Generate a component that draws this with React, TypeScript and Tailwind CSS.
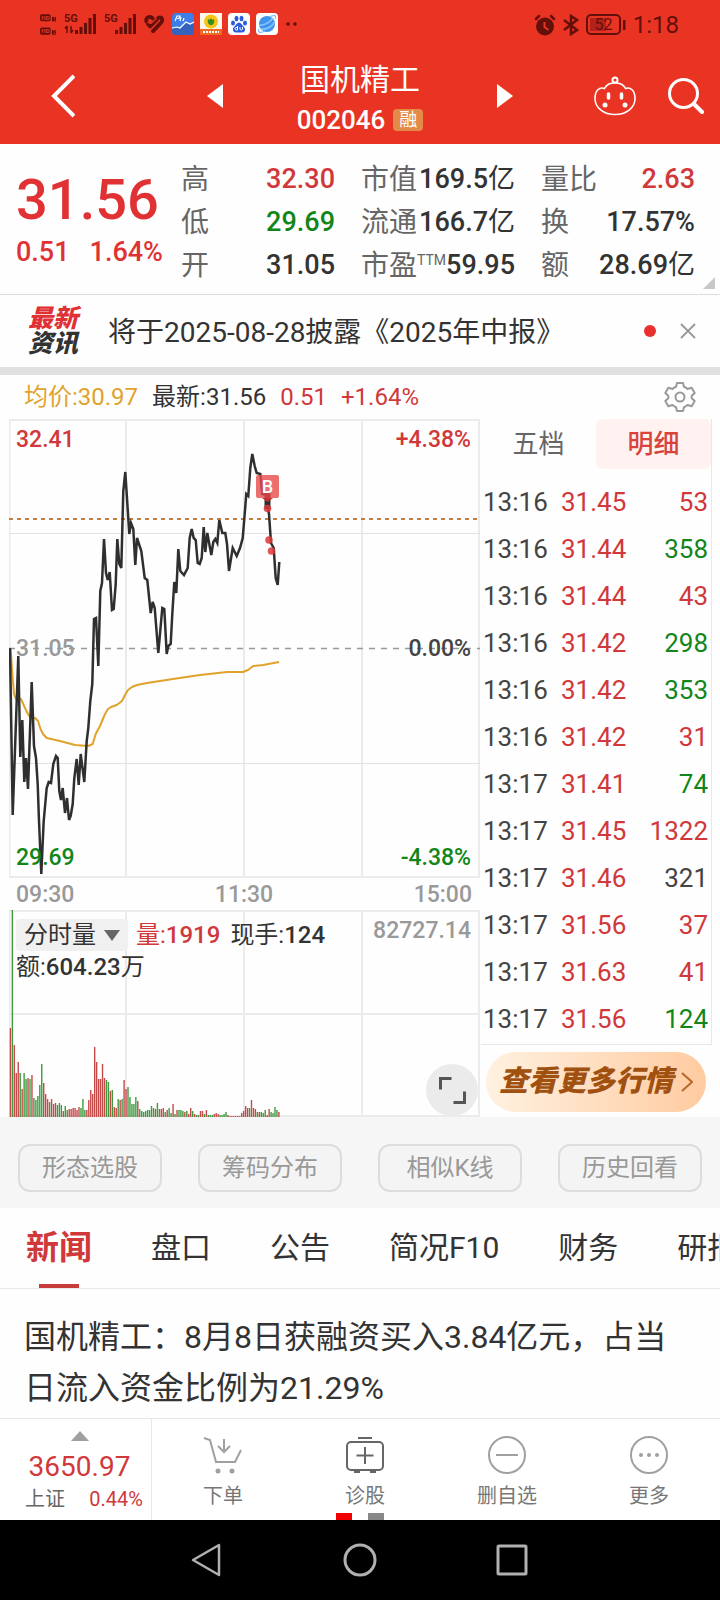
import React from 'react'

const UP = 'text-[#d0383a]'
const DOWN = 'text-[#12861a]'
const INK = 'text-[#333333]'

type Stat = { label: string; sup?: string; value: string; unit?: string; tone: string }

const stats: Stat[] = [
  { label: '高', value: '32.30', tone: UP },
  { label: '市值', value: '169.5', unit: '亿', tone: INK },
  { label: '量比', value: '2.63', tone: UP },
  { label: '低', value: '29.69', tone: DOWN },
  { label: '流通', value: '166.7', unit: '亿', tone: INK },
  { label: '换', value: '17.57%', tone: INK },
  { label: '开', value: '31.05', tone: INK },
  { label: '市盈', sup: 'TTM', value: '59.95', tone: INK },
  { label: '额', value: '28.69', unit: '亿', tone: INK },
]

const trades: [string, string, string, string][] = [
  ['13:16', '31.45', '53', UP],
  ['13:16', '31.44', '358', DOWN],
  ['13:16', '31.44', '43', UP],
  ['13:16', '31.42', '298', DOWN],
  ['13:16', '31.42', '353', DOWN],
  ['13:16', '31.42', '31', UP],
  ['13:17', '31.41', '74', DOWN],
  ['13:17', '31.45', '1322', UP],
  ['13:17', '31.46', '321', 'text-[#444444]'],
  ['13:17', '31.56', '37', UP],
  ['13:17', '31.63', '41', UP],
  ['13:17', '31.56', '124', DOWN],
]

const priceLine =
  '10,647 12.7,814 18.3,655 20.3,756 22.3,719 24.3,781 26,757 28,788 31.7,681 34,745 36,757 37.7,783 39,820 41.3,873 43.7,820 46.7,787 48.7,781 51,782 53.3,763 56,755 57.7,757 59.3,790 61,799 62.7,787 65,812 67,797 69,819 70.7,815 72.7,803 74.3,777 76.7,758 78.7,784 80.7,753 84.3,781 86.7,740 88.3,727 90.3,700 92.3,683 94,618 96,617 98.3,665 100.3,590 102,582 104,538 106,572 107.7,579 109.7,571 112,609 113.7,608 115.7,583 117.3,538 119.3,563 121.3,567 123.3,490 125.3,471 129.3,533 131,522 133.3,528 135.3,564 137,537 141.3,550 144.7,577 147.3,579 150.7,612 152.7,601 154.7,607 158.3,652 162.3,607 164.3,608 166.7,653 168.3,645 170.7,643 172.3,613 174.3,581 176.3,592 178.3,548 180.3,570 184,574 187.7,567 189.7,537 191.7,528 193.7,537 195.7,539 197.7,562 199.7,563 201.7,557 203.7,526 205.3,551 207.3,532 211.3,554 213.3,541 215.3,538 217.3,542 219.3,519 222.3,532 225.3,532 227,543 229,570 232.7,547 236.7,555 240,547 242.7,537 244.7,513 246.3,493 248.3,495 250.3,467 252.3,453 254.7,465 256.7,472 260.3,473 262.3,493 266.7,494 267.3,503 269,513 271,542 273.7,547 275.7,577 277.7,584 279.3,561'

const averageLine =
  '10,647 11,653 12.5,675 14,693 16,698 21,698 25,707 28,713 30,716 35,717 38,720 40.5,728 43,733 46.7,737 60,740 75,744 88,745 92.7,743 95.7,733 100,725 105,713 108,708 111,706 116.7,704 122,700 125,694 128,689 132,686 137,684 147,682 173,678 200,674 227,671 243,671 248,669 253,665 263,664 279,661'

const volumes =
  'r89 g208 r72 r44 r55 g44 r28 g44 g38 r39 g38 r42 g19 g17 g21 g32 g53 r34 r23 r18 g15 r18 r13 r14 g12 g14 g12 r6 g11 g7 r8 r8 r9 r9 r7 r10 g9 g18 g7 r7 r17 r27 r23 r70 r55 r38 r38 r53 r39 g37 g35 r26 g27 r10 r9 g18 r17 g18 r37 r28 g30 g20 g13 g13 g20 r16 g8 g6 g5 g6 g7 g7 g11 g9 r8 g14 g8 r8 r9 g5 r7 g9 g4 r13 g3 r7 g7 g7 g6 r5 g6 r3 r9 g6 r3 g2 g2 r6 r6 g3 r7 g2 g2 g2 r3 r4 r3 g2 g2 g3 g5 r2 r1 r1 r1 r1 r1 g1 r4 r6 r11 r9 g9 r17 r9 r8 g5 r5 g5 g4 g7 r2 r8 g5 g4 g10 g7 r5'
    .split(' ')
    .map((v) => ({ up: v[0] === 'r', h: Number(v.slice(1)) }))

function SignalBars({ data }: { data?: boolean }) {
  return (
    <svg className="h-6 w-8" viewBox="0 0 32 24" fill="#650f0a" aria-hidden="true">
      <text x="0" y="10" fontSize="11" fontWeight="700" fontFamily="Roboto">5G</text>
      {data && <path d="M3 14v7M3 14l-2 2.500M7 21v-7M7 21l2-3" stroke="#650f0a" strokeWidth="1.500" fill="none" />}
      <rect x="11" y="18" width="3" height="4" />
      <rect x="15.500" y="15" width="3" height="7" />
      <rect x="20" y="11" width="3" height="11" />
      <rect x="24.500" y="6" width="3" height="16" />
      <rect x="29" y="2" width="3" height="20" />
    </svg>
  )
}

function StatusBar() {
  return (
    <div className="flex h-12 items-center justify-between pr-[41px] pl-10 text-[#650f0a]">
      <div className="flex items-center gap-2">
        <svg className="h-6 w-4" viewBox="0 0 18 24" aria-hidden="true">
          {[1, 16].map((y, i) => (
            <g key={y}>
              <rect x="0" y={y} width="12" height="8" rx="2" fill="#650f0a" />
              <text x="1.500" y={y + 6.500} fontSize="7" fontWeight="700" fontFamily="Roboto" fill="#e93424">HD</text>
              <rect x="13.500" y={y + 3} width="4.500" height="5" fill="#650f0a" />
              <text x="14.500" y={y + 7.300} fontSize="5" fontFamily="Roboto" fill="#e93424">{i + 1}</text>
            </g>
          ))}
        </svg>
        <SignalBars data />
        <SignalBars />
        <svg className="h-6 w-5" viewBox="0 0 21 20" fill="none" stroke="#650f0a" strokeWidth="4" strokeLinecap="round" strokeLinejoin="round" aria-hidden="true">
          <path d="M2.500 7.500C1.500 3 6.500 1 9 4M4.500 10.500l2 2L14 4.500C17 1 21 4.500 18 8.500L9.500 17.500" />
          <path d="M8.500 11l5-5" stroke="#650f0a" />
          <path d="M4 8.500l3.500 1L13 4M8 14.500l8-8" stroke="#e93424" strokeWidth="1.200" />
        </svg>
        <div className="flex items-center gap-[6px]">
          <svg className="size-[22px]" viewBox="0 0 22 22" aria-hidden="true">
            <rect width="22" height="22" rx="4" fill="#3e7ee8" />
            <path d="M0 16l5-2 3 1 6-6 4 3 4-3v9a4 4 0 0 1-4 4H4a4 4 0 0 1-4-4z" fill="#3463bd" />
            <path d="M0 15l5-1 3 1 6-6 4 2 4-2" stroke="#fff" strokeWidth="1.200" fill="none" />
            <path d="M3 8l2-5h3l-1 2.500H5M9 4l-1 4M12 5l-1 3" stroke="#fff" strokeWidth="1.200" fill="none" />
          </svg>
          <svg className="size-[22px]" viewBox="0 0 22 22" aria-hidden="true">
            <rect width="22" height="22" fill="#fff8e8" />
            <circle cx="11" cy="8.500" r="7" fill="#f5c518" />
            <path d="M8 6c1 1 2 1 3-1 1 2 2 2 3 1 1 4-1 6-3 6s-4-2-3-6z" fill="#3d8b1d" />
            <rect y="16" width="22" height="6" fill="#f26a21" />
            <path d="M3 19h16" stroke="#fff" strokeWidth="2" strokeDasharray="2 1" />
          </svg>
          <svg className="size-[22px]" viewBox="0 0 22 22" aria-hidden="true">
            <rect width="22" height="22" rx="4" fill="#fff" />
            <g fill="#2b5ddb">
              <ellipse cx="5" cy="10" rx="2" ry="2.600" />
              <ellipse cx="8.500" cy="5.500" rx="2" ry="2.700" />
              <ellipse cx="13.500" cy="5.500" rx="2" ry="2.700" />
              <ellipse cx="17" cy="10" rx="2" ry="2.600" />
              <path d="M11 9.500c2 0 3 2.500 5 4.500s1 5.500-2 5.500H8c-3 0-4-3.500-2-5.500s3-4.500 5-4.500z" />
            </g>
            <path d="M9.500 13v4H8a1.300 1.300 0 0 1 0-2.500h1.500M12 14v2.200c0 1 2.500 1 2.500 0V14" stroke="#fff" fill="none" />
          </svg>
          <svg className="size-[22px]" viewBox="0 0 22 22" aria-hidden="true">
            <rect width="22" height="22" rx="4" fill="#fff" />
            <circle cx="11" cy="11" r="8" fill="#3f95ee" />
            <path d="M3.500 12C8 13 14 9 16.500 5.500M5 16c6 1 12-3 14-8" stroke="#8cc6fb" strokeWidth="1.500" fill="none" />
            <path d="M3 16c-2 4 2 4 6 2M19 6c2-4-1-4-5-2.500" stroke="#82bdf5" strokeWidth="1.200" fill="none" />
          </svg>
        </div>
        <svg className="h-1 w-3" viewBox="0 0 12 4" fill="#650f0a" aria-hidden="true">
          <circle cx="2" cy="2" r="1.800" />
          <circle cx="9" cy="2" r="1.800" />
        </svg>
      </div>
      <div className="flex items-center gap-[7px] pt-px">
        <svg className="size-[22px]" viewBox="0 0 22 22" aria-hidden="true">
          <circle cx="11" cy="12.500" r="9" fill="#650f0a" />
          <path d="M2 5l3-3M20 5l-3-3" stroke="#650f0a" strokeWidth="2.500" strokeLinecap="round" />
          <path d="M10.500 8v5l4 3" stroke="#e93424" strokeWidth="2" fill="none" />
        </svg>
        <svg className="h-[22px] w-4" viewBox="0 0 16 22" fill="none" stroke="#650f0a" strokeWidth="2.500" aria-hidden="true">
          <path d="M1 6l13 10-6 4V2l6 4L1 16" />
        </svg>
        <svg className="h-[22px] w-10" viewBox="0 0 40 22" aria-hidden="true">
          <rect x="1" y="1" width="33" height="19" rx="4" fill="none" stroke="#650f0a" strokeWidth="2" />
          <rect x="4" y="4" width="16" height="13" fill="#b3221a" />
          <rect x="37" y="6" width="2.500" height="10" fill="#650f0a" />
          <text x="17.500" y="16" textAnchor="middle" fontSize="16" fontFamily="Roboto" fill="#650f0a">52</text>
        </svg>
        <span className="text-2xl leading-6">1:18</span>
      </div>
    </div>
  )
}

function Header() {
  return (
    <header className="bg-[#e93424] text-white">
      <StatusBar />
      <div className="grid h-24 grid-cols-[1fr_auto_1fr] items-center">
        <button aria-label="返回" className="w-20 pl-[51px]">
          <svg className="h-11 w-6" viewBox="0 0 24 44" fill="none" stroke="currentColor" strokeWidth="4" aria-hidden="true">
            <path d="M23 2L3 22l20 20" />
          </svg>
        </button>
        <div className="flex w-[306px] items-center justify-between">
          <button aria-label="上一只">
            <svg className="h-6 w-4" viewBox="0 0 16 24" fill="currentColor" aria-hidden="true"><path d="M16 0v24L0 12z" /></svg>
          </button>
          <div className="flex flex-col items-center pt-2">
            <h1 className="text-[30px] leading-10">国机精工</h1>
            <div className="flex items-center gap-2">
              <span className="text-[26px] leading-10 font-medium">002046</span>
              <span className="rounded-sm bg-[#e28a46] px-[6px] text-lg leading-[22px]">融</span>
            </div>
          </div>
          <button aria-label="下一只">
            <svg className="h-6 w-4" viewBox="0 0 16 24" fill="currentColor" aria-hidden="true"><path d="M0 0v24l16-12z" /></svg>
          </button>
        </div>
        <div className="flex items-center justify-end gap-8 pr-4">
          <button aria-label="助手">
            <svg className="h-10 w-[42px]" viewBox="0 0 42 40" fill="none" stroke="currentColor" strokeWidth="1.600" aria-hidden="true">
              <path d="M10.500 12.500C14 5 28 5 31.500 12.500c5-2 9.500 2 9.500 10C41 32 32 38.500 21 38.500S1 32 1 22.500c0-8 4.500-12 9.500-10z" />
              <circle cx="21" cy="4" r="2.500" strokeWidth="2" />
              <path d="M14.500 18v4M27.500 18v4" strokeWidth="3.500" strokeLinecap="round" />
              <circle cx="11" cy="29" r="2.500" fill="currentColor" stroke="none" />
              <circle cx="31" cy="29" r="2.500" fill="currentColor" stroke="none" />
            </svg>
          </button>
          <button aria-label="搜索">
            <svg className="h-10 w-9" viewBox="0 0 36 40" fill="none" stroke="currentColor" strokeWidth="3" aria-hidden="true">
              <circle cx="15.500" cy="17.500" r="14" />
              <path d="M26 28l8 8" strokeWidth="4" strokeLinecap="round" />
            </svg>
          </button>
        </div>
      </div>
    </header>
  )
}

function Quote() {
  return (
    <section className="relative flex border-b border-[#dddddd] pt-[14px] pr-[25px] pb-[7px] pl-4">
      <div className="w-[165px] shrink-0 pt-2 font-medium text-[#e03234]">
        <div className="text-[56px] leading-[68px]">31.56</div>
        <div className="flex gap-5 text-[27px] leading-9">
          <span>0.51</span>
          <span>1.64%</span>
        </div>
      </div>
      <dl className="grid flex-1 grid-cols-3 gap-x-[26px]">
        {stats.map((s) => (
          <div key={s.label} className="flex justify-between text-[28px] leading-[43px] whitespace-nowrap">
            <dt className="flex text-[#666666]">
              {s.label}
              {s.sup && <span className="text-sm leading-8">{s.sup}</span>}
            </dt>
            <dd className={`text-[27px] font-medium ${s.tone}`}>
              {s.value}
              {s.unit && <span className="font-normal">{s.unit}</span>}
            </dd>
          </div>
        ))}
      </dl>
      <svg className="absolute right-[5px] bottom-[5px] size-3" viewBox="0 0 12 12" fill="#c8c8c8" aria-hidden="true">
        <path d="M12 0v12H0z" />
      </svg>
    </section>
  )
}

function Notice() {
  return (
    <section className="flex h-20 items-center border-b-8 border-[#e0e0e0] pr-6 pl-7">
      <div className="w-20 shrink-0 text-[25px] leading-[25px] font-black italic">
        <div className="text-[#e03234]">最新</div>
        <div className="text-[#333333]">资讯</div>
      </div>
      <a href="#notice" className="flex-1 pt-1 text-[28px] text-[#333333]">将于2025-08-28披露《2025年中报》</a>
      <span className="size-3 rounded-full bg-[#e8302e]" />
      <button aria-label="关闭" className="ml-6">
        <svg className="size-4" viewBox="0 0 16 16" stroke="#999999" strokeWidth="1.800" aria-hidden="true">
          <path d="M1 1l14 14M15 1L1 15" />
        </svg>
      </button>
    </section>
  )
}

function PriceChart() {
  return (
    <div className="relative h-[460px] text-[23px] leading-[30px] font-medium">
      <svg className="block size-full" viewBox="9 418 472 460" preserveAspectRatio="none" aria-label="分时走势">
        <g stroke="#ebebeb" strokeWidth="2" fill="none">
          <path d="M9 419H480M9 876H480M9.500 418V877M126 418V877M244 418V877M362 418V877M479 418V877" />
          <path d="M9 532.500H480M9 762.500H480" strokeWidth="1" stroke="#e2e2e2" />
        </g>
        <path d="M9 647.500H480" stroke="#999999" strokeWidth="1.500" strokeDasharray="6 6" />
        <path d="M9 518H478" stroke="#c08042" strokeWidth="2" strokeDasharray="4 4" />
        <polyline points={averageLine} fill="none" stroke="#dfa32c" strokeWidth="2" strokeLinejoin="round" />
        <polyline points={priceLine} fill="none" stroke="#2f2f2f" strokeWidth="2.500" />
        <path d="M267.500 492v16" stroke="#2f2f2f" strokeWidth="6" />
        <path d="M262 497h11l-5.500 4z" fill="#c8302e" />
        <g fill="#dc3a3a" fillOpacity="0.85">
          <circle cx="267.500" cy="507.500" r="3.800" />
          <circle cx="269" cy="539" r="3.800" />
          <circle cx="271.500" cy="550" r="3.800" />
        </g>
        <rect x="256" y="474" width="23" height="23" rx="2" fill="#e84a4a" fillOpacity="0.8" />
        <text x="267.500" y="492" textAnchor="middle" fontSize="18" fontFamily="Roboto" fill="#ffffff">B</text>
      </svg>
      <div className="pointer-events-none absolute inset-0 flex flex-col justify-between py-[6px] pr-[10px] pl-[7px]">
        <div className={`flex justify-between ${UP}`}><span>32.41</span><span>+4.38%</span></div>
        <div className="flex justify-between text-[#999999]"><span>31.05</span><span className="text-[#444444]">0.00%</span></div>
        <div className={`flex justify-between ${DOWN}`}><span>29.69</span><span>-4.38%</span></div>
      </div>
    </div>
  )
}

function VolumeChart() {
  return (
    <div className="relative h-[207px] text-2xl leading-8 text-[#333333]">
      <svg className="block size-full" viewBox="9 909 472 207" preserveAspectRatio="none" aria-label="分时量">
        <path d="M9 910H480M9 1013H480M9 1115H480M9.500 909V1116M126 909V1116M244 909V1116M362 909V1116M479 909V1116" stroke="#ebebeb" strokeWidth="2" />
        {volumes.map((v, i) => (
          <rect key={i} x={9.700 + i * 1.960} y={1116 - v.h} width="1.400" height={v.h} fill={v.up ? '#c44a4a' : '#3f9a3f'} />
        ))}
      </svg>
      <div className="absolute inset-x-0 top-0 pt-[9px] pr-[10px] pl-[7px]">
        <div className="flex items-start">
          <button className="flex items-center gap-2 rounded-sm bg-[#f0f0f0] px-2">
            分时量
            <svg className="h-[11px] w-4" viewBox="0 0 16 11" fill="#666666" aria-hidden="true"><path d="M0 0h16L8 11z" /></svg>
          </button>
          <span className={`ml-2 ${UP}`}>量:<span className="font-medium">1919</span></span>
          <span className="ml-[10px]">现手:<span className="font-medium">124</span></span>
          <span className="ml-auto text-[23px] leading-6 font-medium text-[#999999]">82727.14</span>
        </div>
        <div>额:<span className="font-medium">604.23</span>万</div>
      </div>
      <button aria-label="全屏" className="absolute right-[3px] bottom-px flex size-[52px] items-center justify-center rounded-full bg-[#ebebeb]">
        <svg className="size-[27px]" viewBox="0 0 27 27" fill="none" stroke="#555555" strokeWidth="3" aria-hidden="true">
          <path d="M1.500 12.500v-11h11M25.500 14.500v11h-11" />
        </svg>
      </button>
    </div>
  )
}

function MarketPanel() {
  return (
    <section>
      <div className="flex items-center justify-between pr-6 pl-6 text-2xl leading-[43px]">
        <div className="flex gap-[14px] pt-px">
          <span className="text-[#dfa32c]">均价:30.97</span>
          <span className="text-[#333333]">最新:31.56</span>
          <span className={UP}>0.51</span>
          <span className={UP}>+1.64%</span>
        </div>
        <button aria-label="设置">
          <svg className="size-8" viewBox="0 0 32 32" fill="none" stroke="#999999" strokeWidth="2" strokeLinejoin="round" aria-hidden="true">
            <path d="M13 2h6l1 3.800q2 .8 3.500 2.200l4.200-1.200 3 5.200-3 2.700v2.600l3 2.700-3 5.200-4.200-1.200q-1.500 1.400-3.500 2.200L19 30h-6l-1-3.800q-2-.8-3.500-2.200l-4.200 1.200-3-5.200 3-2.700v-2.600l-3-2.700 3-5.200L8.500 8Q10 6.600 12 5.800z" />
            <circle cx="16" cy="16" r="4.500" />
          </svg>
        </button>
      </div>
      <div className="grid grid-cols-[1fr_231px] pr-2 pl-[9px]">
        <div>
          <PriceChart />
          <div className="flex justify-between pr-[9px] pl-[7px] text-[23px] leading-[31px] font-medium text-[#999999]">
            <span className="flex-1">09:30</span>
            <span className="flex-1 text-center">11:30</span>
            <span className="flex-1 text-right">15:00</span>
          </div>
          <VolumeChart />
        </div>
        <div className="flex flex-col">
          <div className="border-r border-b border-[#e8e8e8] pb-px">
            <div role="tablist" className="grid grid-cols-2 text-[26px] leading-[50px]">
              <button role="tab" aria-selected="false" className="text-[#666666]">五档</button>
              <button role="tab" aria-selected="true" className="rounded-md bg-[#fff2f1] font-medium text-[#d8443c]">明细</button>
            </div>
            <table className="mt-[10px] w-full text-[26px] leading-[47px]">
              <tbody>
                {trades.map(([time, price, qty, tone], i) => (
                  <tr key={i}>
                    <td className="w-[80px] p-0 pl-[2px] text-[#444444]">{time}</td>
                    <td className={`p-0 ${UP}`}>{price}</td>
                    <td className={`p-0 pr-[3px] text-right ${tone}`}>{qty}</td>
                  </tr>
                ))}
              </tbody>
            </table>
          </div>
          <a href="#more" className="mt-[7px] mr-[6px] ml-[5px] flex h-[60px] items-center justify-center gap-2 rounded-full bg-linear-to-r from-[#fff1e0] to-[#ffcba0] text-[29px] font-black text-[#a0500f] italic">
            查看更多行情
            <svg className="h-5 w-3" viewBox="0 0 12 20" fill="none" stroke="#b5682a" strokeWidth="2" aria-hidden="true"><path d="M1 1l10 9-10 9" /></svg>
          </a>
        </div>
      </div>
    </section>
  )
}

function Tools() {
  return (
    <div className="grid grid-cols-4 gap-9 bg-[#f6f6f6] px-[18px] pt-[27px] pb-4">
      {['形态选股', '筹码分布', '相似K线', '历史回看'].map((t) => (
        <button key={t} className="rounded-xl border-2 border-[#dddddd] bg-[#f4f4f4] pt-px text-2xl leading-[43px] whitespace-nowrap text-[#999999]">{t}</button>
      ))}
    </div>
  )
}

function News() {
  return (
    <section>
      <div role="tablist" className="flex items-center gap-[59px] overflow-hidden border-b border-[#e8e8e8] pl-[26px] text-[30px] leading-20 whitespace-nowrap text-[#333333]">
        <button role="tab" aria-selected="true" className="relative text-[33px] font-bold text-[#d0383a]">
          新闻
          <span className="absolute bottom-0 left-1/2 h-1 w-10 -translate-x-1/2 bg-[#c93c3c]" />
        </button>
        {['盘口', '公告', '简况F10', '财务', '研报'].map((t) => (
          <button key={t} role="tab" aria-selected="false">{t}</button>
        ))}
      </div>
      <article className="px-6 pt-[23px]">
        <h2 className="text-[32px] leading-[51px] text-[#333333]">
          <a href="#news">国机精工：8月8日获融资买入3.84亿元，占当日流入资金比例为21.29%</a>
        </h2>
        <p className="pt-[3px] pl-[26px] text-xl leading-6 text-[#999999]">转载</p>
      </article>
    </section>
  )
}

function BottomBar() {
  const items: [string, React.ReactNode][] = [
    ['下单', (
      <g stroke="#a0a0a0" strokeWidth="2">
        <path d="M1 3l6 2 6 22h19l6-12M21 4v13M15 11l6 6 6-6" />
        <circle cx="15" cy="36" r="1.500" fill="#a0a0a0" />
        <circle cx="29" cy="36" r="1.500" fill="#a0a0a0" />
      </g>
    )],
    ['诊股', (
      <g stroke="#666666" strokeWidth="2">
        <rect x="2" y="7" width="36" height="28" rx="4" />
        <path d="M13 3h14M20 12v17M11.500 20.500h17M9 37h6M25 37h6" />
      </g>
    )],
    ['删自选', (
      <g stroke="#a0a0a0" strokeWidth="2">
        <circle cx="20" cy="20" r="18" />
        <path d="M9 20h22" />
      </g>
    )],
    ['更多', (
      <g stroke="#a0a0a0" strokeWidth="2">
        <circle cx="20" cy="20" r="18" />
        <g fill="#a0a0a0" stroke="none"><circle cx="12" cy="20" r="2" /><circle cx="20" cy="20" r="2" /><circle cx="28" cy="20" r="2" /></g>
      </g>
    )],
  ]
  return (
    <footer>
      <div className="relative flex h-[102px] border-t border-[#e5e5e5] bg-white">
        <button className="flex w-[152px] shrink-0 flex-col items-center border-r border-[#e8e8e8] pt-3 pr-2 pl-4">
          <svg className="h-[10px] w-[18px]" viewBox="0 0 18 10" fill="#a0a0a0" aria-hidden="true"><path d="M9 0l9 10H0z" /></svg>
          <span className={`mt-2 text-[28px] leading-9 ${UP}`}>3650.97</span>
          <span className="flex w-full justify-between pl-[9px] text-xl leading-7">
            <span className="text-[#666666]">上证</span>
            <span className={UP}>0.44%</span>
          </span>
        </button>
        <nav className="grid flex-1 grid-cols-4">
          {items.map(([label, icon]) => (
            <button key={label} className="flex flex-col items-center gap-[7px] pt-4 text-xl leading-7 text-[#777777]">
              <svg className="size-10" viewBox="0 0 40 40" fill="none" aria-hidden="true">{icon}</svg>
              {label}
            </button>
          ))}
        </nav>
        <div className="absolute bottom-0 left-1/2 flex -translate-x-1/2 gap-4">
          <span className="h-[7px] w-4 bg-[#f00000]" />
          <span className="h-[7px] w-4 bg-[#888888]" />
        </div>
      </div>
      <div className="flex h-20 items-center justify-center gap-[119px] bg-black">
        <button aria-label="后退">
          <svg className="size-[34px]" viewBox="0 0 34 34" fill="none" stroke="#b0b0b0" strokeWidth="2.500" strokeLinejoin="round" aria-hidden="true"><path d="M29 2v30L3 17z" /></svg>
        </button>
        <button aria-label="主页">
          <svg className="size-[34px]" viewBox="0 0 34 34" fill="none" stroke="#b0b0b0" strokeWidth="3" aria-hidden="true"><circle cx="17" cy="17" r="15" /></svg>
        </button>
        <button aria-label="最近任务">
          <svg className="size-[34px]" viewBox="0 0 34 34" fill="none" stroke="#b0b0b0" strokeWidth="3" aria-hidden="true"><rect x="2" y="3" width="28" height="28" rx="1" /></svg>
        </button>
      </div>
    </footer>
  )
}

export default function App() {
  return (
    <div lang="zh-CN" className="flex h-screen flex-col bg-[#fefefe] [font-family:Roboto,'Noto_Sans_CJK_SC',sans-serif]">
      <Header />
      <main className="min-h-0 flex-1 overflow-y-auto [scrollbar-width:none]">
        <Quote />
        <Notice />
        <MarketPanel />
        <Tools />
        <News />
      </main>
      <BottomBar />
    </div>
  )
}
